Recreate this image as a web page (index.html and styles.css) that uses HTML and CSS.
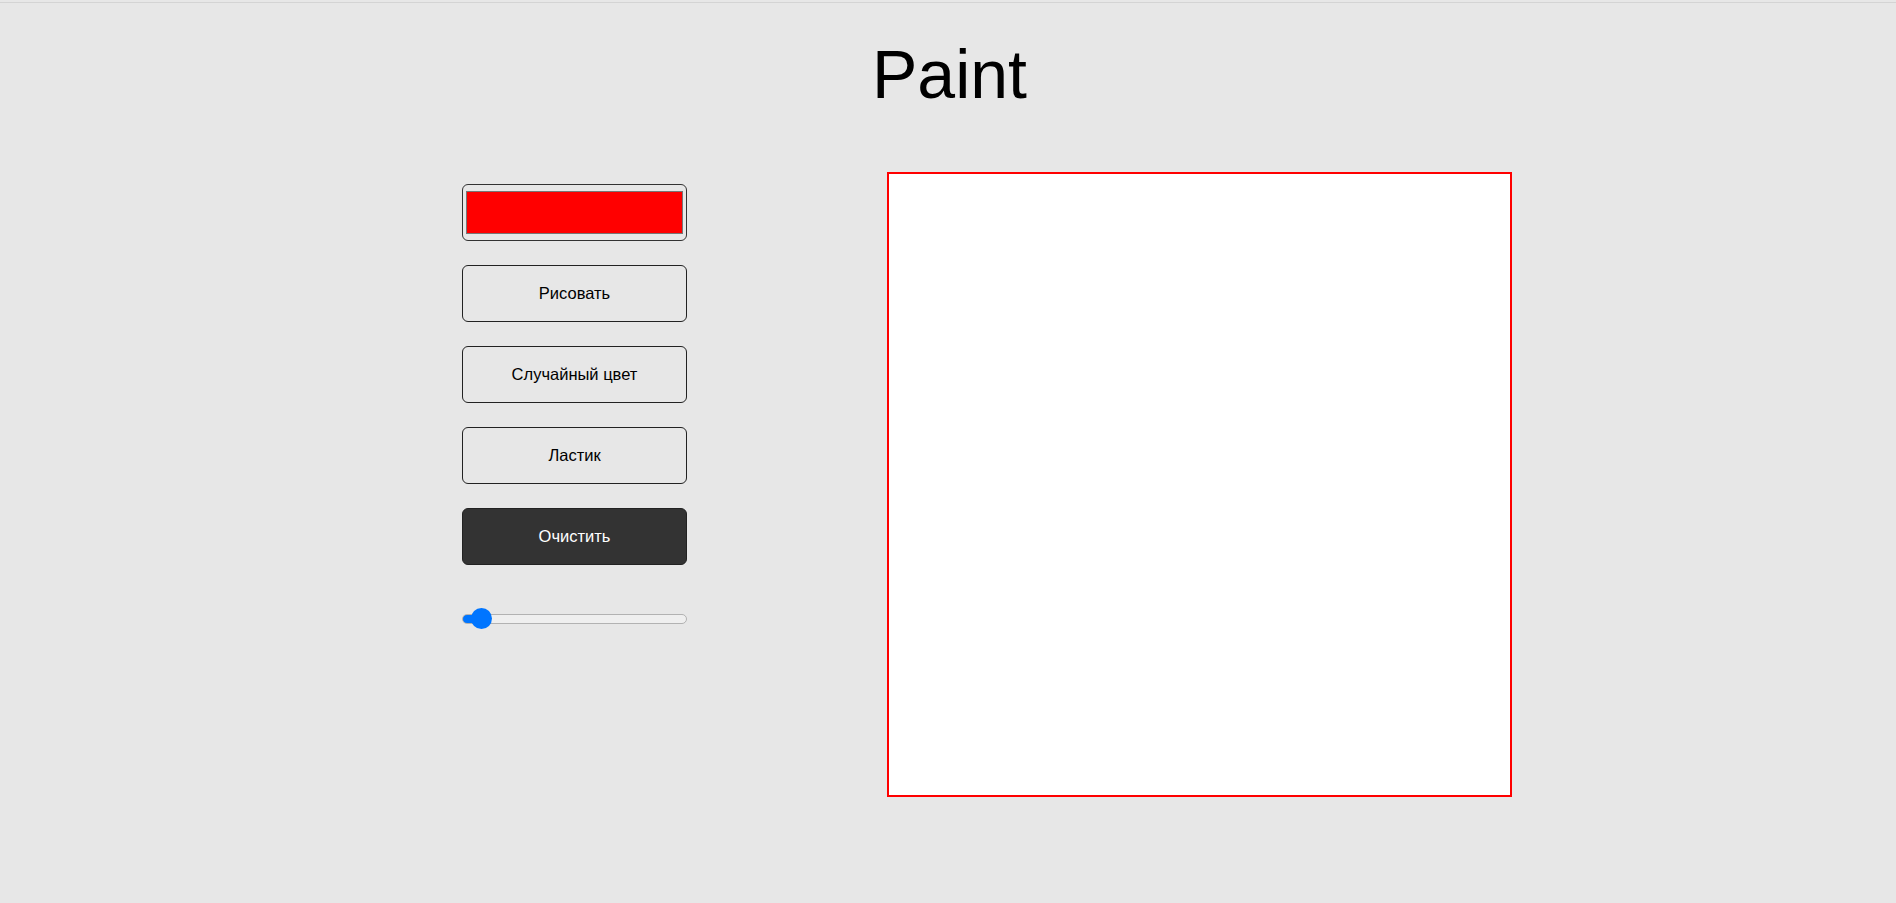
FILE: index.html
```html
<!DOCTYPE html>
<html lang="ru">
<head>
<meta charset="utf-8">
<title>Paint</title>
<link rel="stylesheet" href="styles.css">
</head>
<body>
<div class="topline"></div>
<h1 class="title">Paint</h1>
<main class="app">
  <div class="controls">
    <input class="color" type="color" value="#ff0000">
    <button class="btn">Рисовать</button>
    <button class="btn">Случайный цвет</button>
    <button class="btn">Ластик</button>
    <button class="btn btn-dark">Очистить</button>
    <input class="size" type="range" min="1" max="100" value="5">
  </div>
  <canvas class="board" width="621" height="621"></canvas>
</main>
</body>
</html>
```

FILE: styles.css
```css
html, body {
  margin: 0;
  padding: 0;
  background: #e7e7e7;
  font-family: "Liberation Sans", Arial, sans-serif;
  height: 100%;
  overflow: hidden;
}

.topline {
  margin-top: 2px;
  height: 1px;
  background: #d4d4d4;
}

.title {
  margin: 32px 0 0;
  padding-left: 3px;
  text-align: center;
  font-weight: normal;
  font-size: 68px;
  line-height: 78px;
  color: #000;
}

.app {
  display: flex;
  justify-content: center;
  align-items: flex-start;
  gap: 200px;
  padding-left: 78px;
  margin-top: 59px;
}

.controls {
  display: flex;
  flex-direction: column;
  width: 225px;
  margin-top: 12px;
  gap: 24px;
}

.color {
  -webkit-appearance: none;
  appearance: none;
  box-sizing: border-box;
  width: 225px;
  height: 57px;
  margin: 0;
  padding: 6px 3px;
  border: 1px solid #333;
  border-radius: 6px;
  background: transparent;
  cursor: pointer;
}

.color::-webkit-color-swatch-wrapper {
  padding: 0;
}

.color::-webkit-color-swatch {
  border: 1px solid #767676;
  border-radius: 0;
}

.btn {
  box-sizing: border-box;
  width: 225px;
  height: 57px;
  margin: 0;
  padding: 0;
  border: 1px solid #222;
  border-radius: 6px;
  background: transparent;
  color: #000;
  font-family: "Liberation Sans", Arial, sans-serif;
  font-size: 16.5px;
  cursor: pointer;
}

.btn-dark {
  background: #333;
  color: #fff;
}

.size {
  -webkit-appearance: none;
  appearance: none;
  width: 225px;
  height: 21px;
  margin: 19px 0 0;
  padding: 0;
  background: transparent;
}

.size::-webkit-slider-runnable-track {
  box-sizing: border-box;
  height: 10px;
  border: 1px solid #b2b2b2;
  border-radius: 5px;
  background: linear-gradient(to right, #0075ff 0, #0075ff 18px, #efefef 18px);
}

.size::-webkit-slider-thumb {
  -webkit-appearance: none;
  appearance: none;
  width: 21px;
  height: 21px;
  margin-top: -6.5px;
  border: none;
  border-radius: 50%;
  background: #0075ff;
}

.board {
  display: block;
  width: 621px;
  height: 621px;
  border: 2px solid #ff0000;
  background: #fff;
}
```
